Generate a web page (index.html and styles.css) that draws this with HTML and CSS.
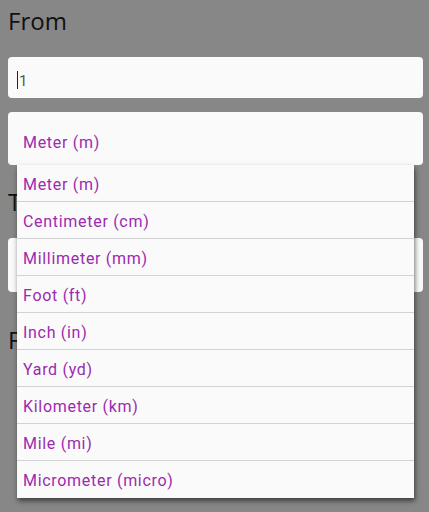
FILE: index.html
```html
<!DOCTYPE html>
<html>
<head>
<meta charset="utf-8">
<link rel="stylesheet" href="styles.css">
</head>
<body>
<div class="page">
  <div class="label label-first">From</div>
  <div class="input"><span class="caret"></span><span class="value">1</span></div>
  <div class="select-wrap">
    <div class="select">Meter (m)</div>
    <ul class="menu">
      <li>Meter (m)</li>
      <li>Centimeter (cm)</li>
      <li>Millimeter (mm)</li>
      <li>Foot (ft)</li>
      <li>Inch (in)</li>
      <li>Yard (yd)</li>
      <li>Kilometer (km)</li>
      <li>Mile (mi)</li>
      <li>Micrometer (micro)</li>
    </ul>
  </div>
  <div class="label label-to">To</div>
  <div class="select select-second">Centimeter (cm)</div>
  <div class="label label-result">Formula</div>
</div>
</body>
</html>
```
FILE: styles.css
```css
html, body {
  margin: 0;
  padding: 0;
  background: #878787;
  height: 100%;
}
.page {
  padding: 0 6px 0 8px;
  font-family: Roboto, "Liberation Sans", sans-serif;
}
.label {
  font-family: "Open Sans", "Liberation Sans", sans-serif;
  font-size: 24px;
  line-height: 32px;
  color: #111;
}
.label-first {
  margin: 5px 0 20px;
}
.label-to {
  margin: 21px 0 20px;
}
.label-result {
  margin-top: 32px;
}
.input {
  height: 41px;
  background: #fafafa;
  border-radius: 4px;
  display: flex;
  align-items: center;
  padding-left: 9px;
  margin-bottom: 14px;
  box-sizing: border-box;
}
.caret {
  width: 1px;
  height: 18px;
  background: #222;
  margin-top: 4px;
}
.value {
  font-size: 15px;
  color: #555;
  margin-left: 1px;
  margin-top: 6px;
}
.select-wrap {
  position: relative;
}
.select {
  height: 53px;
  box-sizing: border-box;
  background: #fafafa;
  border-radius: 4px;
  padding: 21px 0 0 15px;
  font-size: 16px;
  letter-spacing: 0.7px;
  line-height: 19px;
  color: #9c2ab0;
}
.select-second {
  height: 54px;
}
.menu {
  position: absolute;
  top: 100%;
  left: 9px;
  right: 9px;
  margin: 0;
  padding: 0;
  list-style: none;
  background: #fafafa;
  box-shadow: 1px 3px 5px rgba(0, 0, 0, 0.55);
  z-index: 2;
}
.menu li {
  height: 37px;
  box-sizing: border-box;
  padding: 3px 0 0 6px;
  line-height: 33px;
  font-size: 16px;
  letter-spacing: 0.7px;
  color: #9c2ab0;
  border-bottom: 1px solid #d2d2d2;
}
.menu li:last-child {
  border-bottom: none;
}
```
